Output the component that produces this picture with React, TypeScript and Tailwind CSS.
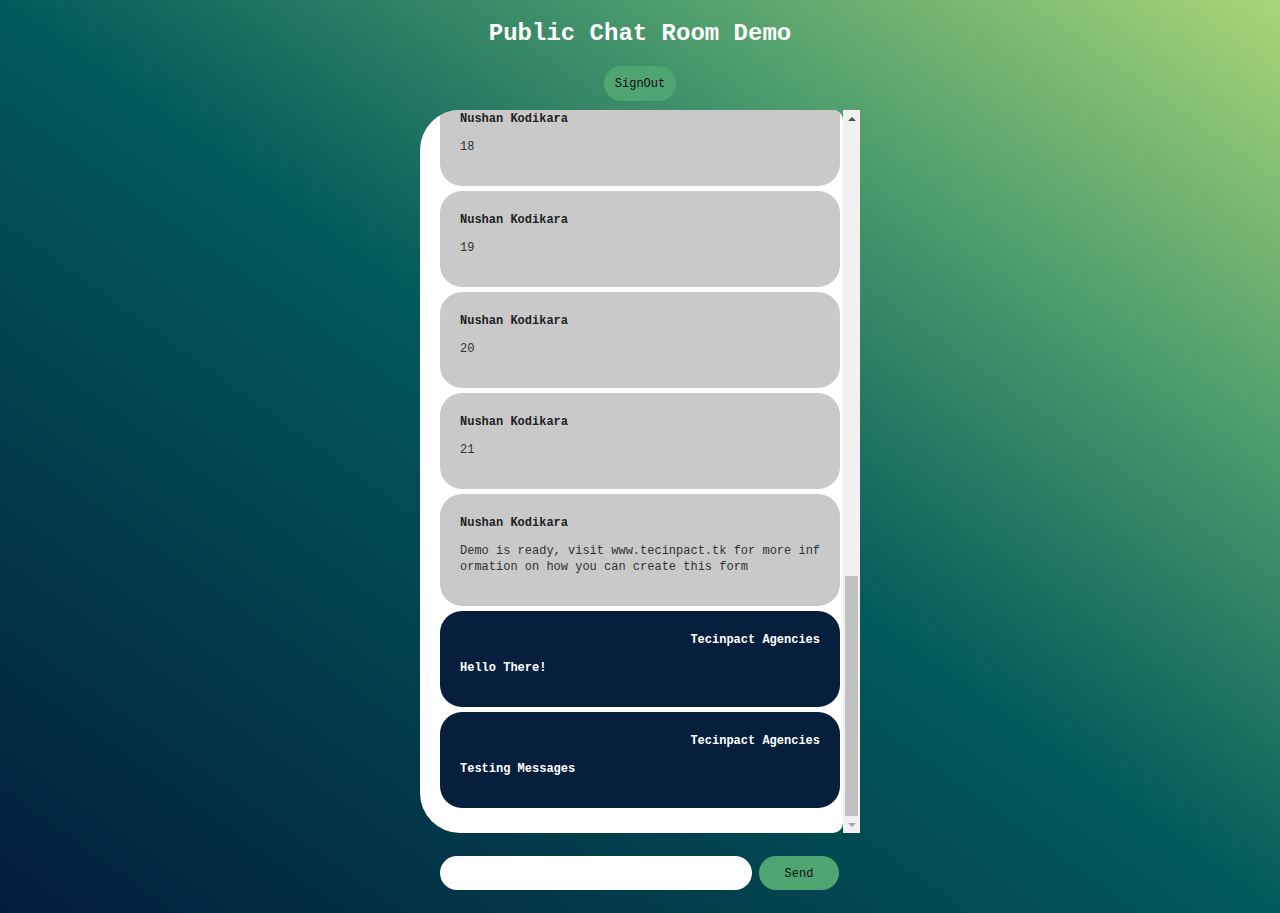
import React from "react";

type Msg = { id: number; name: string; text: string; mine?: boolean };

const messages: Msg[] = [
  { id: 1, name: "Nushan Kodikara", text: "17" },
  { id: 2, name: "Nushan Kodikara", text: "18" },
  { id: 3, name: "Nushan Kodikara", text: "19" },
  { id: 4, name: "Nushan Kodikara", text: "20" },
  { id: 5, name: "Nushan Kodikara", text: "21" },
  {
    id: 6,
    name: "Nushan Kodikara",
    text: "Demo is ready, visit www.tecinpact.tk for more information on how you can create this form",
  },
  { id: 7, name: "Tecinpact Agencies", text: "Hello There!", mine: true },
  { id: 8, name: "Tecinpact Agencies", text: "Testing Messages", mine: true },
];

const mono = "font-['Liberation_Mono','DejaVu_Sans_Mono',monospace]";

function Bubble({ msg }: { msg: Msg }) {
  return (
    <div
      className={`shrink-0 w-[400px] rounded-[22px] px-5 pt-[21px] pb-[31px] ${
        msg.mine ? "bg-[#051f3d] text-white" : "bg-[#c9c9c9] text-[#222]"
      }`}
    >
      <div className={`text-[12px] leading-4 font-bold ${msg.mine ? "text-right" : "text-left"}`}>
        {msg.name}
      </div>
      <p
        className={`mt-3 w-[362px] text-[12px] leading-4 break-all ${
          msg.mine ? "font-bold text-white" : "text-[#333]"
        }`}
      >
        {msg.text}
      </p>
    </div>
  );
}

function FakeScrollbar() {
  return (
    <div className="w-[17px] h-full bg-[#f1f1f1] flex flex-col items-center">
      <div className="h-[17px] flex items-center justify-center">
        <div className="w-0 h-0 border-l-[4px] border-r-[4px] border-b-[4px] border-l-transparent border-r-transparent border-b-[#505050]" />
      </div>
      <div className="flex-1 w-full flex flex-col justify-end px-[2px]">
        <div className="h-[240px] w-full bg-[#c1c1c1]" />
      </div>
      <div className="h-[17px] flex items-center justify-center">
        <div className="w-0 h-0 border-l-[4px] border-r-[4px] border-t-[4px] border-l-transparent border-r-transparent border-t-[#a3a3a3]" />
      </div>
    </div>
  );
}

export default function App() {
  return (
    <main
      className={`${mono} min-h-screen h-[913px] w-full flex flex-col items-center bg-[linear-gradient(to_right_top,#021c3c,#025a5a_50%,#4f9e6d_76%,#a9d577)]`}
    >
      <h1 className="mt-5 text-[24px] leading-[28px] font-bold text-white">Public Chat Room Demo</h1>
      <button className="mt-[18px] h-[35px] px-[11px] rounded-full bg-[#4fa572] text-[12px] text-[#111]">
        SignOut
      </button>

      <div className="mt-[9px] w-[440px] h-[723px] flex">
        <div className="w-[423px] h-full bg-white rounded-l-[40px] rounded-r-[10px] overflow-hidden flex flex-col justify-end items-start gap-[5px] pl-5 pb-[25px]">
          {messages.map((m) => (
            <Bubble key={m.id} msg={m} />
          ))}
        </div>
        <FakeScrollbar />
      </div>

      <form className="mt-[23px] -ml-px flex gap-[7px]" onSubmit={(e) => e.preventDefault()}>
        <input className="w-[312px] h-[34px] rounded-full bg-white px-4 text-[12px] outline-none" />
        <button className="w-[80px] h-[34px] pt-px rounded-full bg-[#4fa572] text-[12px] text-[#111]">Send</button>
      </form>
    </main>
  );
}
